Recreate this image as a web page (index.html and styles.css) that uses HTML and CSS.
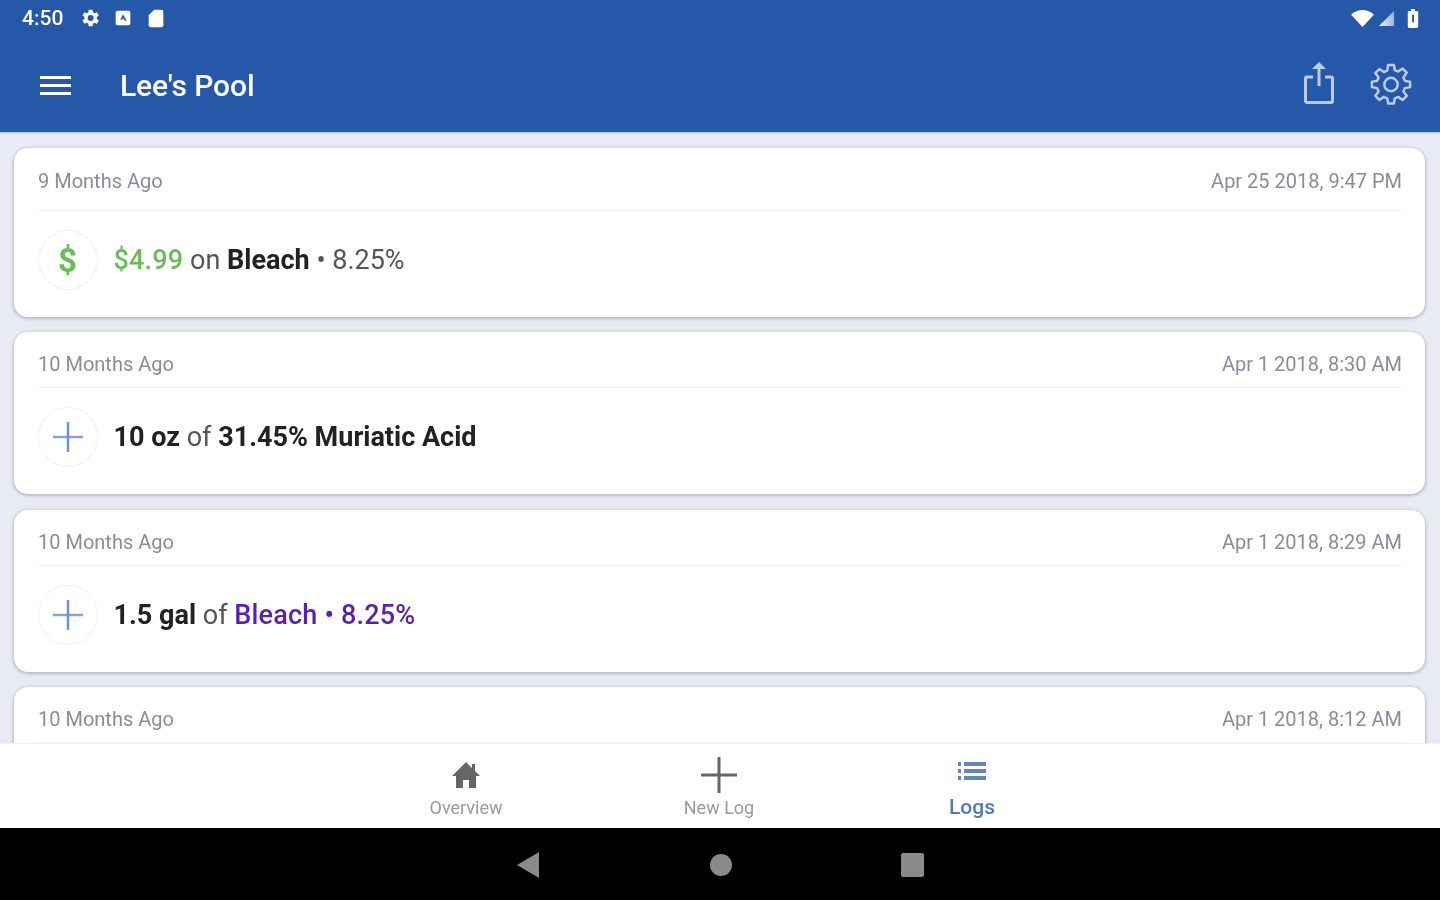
FILE: index.html
```html
<!doctype html>
<html>
    <head>
        <link rel="stylesheet" href="styles.css">
    </head>
    <body>
        <header class="appbar">
            <div class="statusbar">
                <span class="clock">4:50</span>
                <svg class="status-icon" viewBox="0 0 24 24"><path fill="#fff" fill-rule="evenodd" d="M19.400 13a7.500 7.500 0 0 0 0-2l2.200-1.700-2.100-3.600-2.600 1a7.500 7.500 0 0 0-1.700-1l-.4-2.800h-4.200l-.4 2.800a7.500 7.500 0 0 0-1.700 1l-2.600-1-2.100 3.600L6 11a7.500 7.500 0 0 0 0 2l-2.200 1.700 2.100 3.600 2.600-1a7.500 7.500 0 0 0 1.700 1l.4 2.800h4.200l.4-2.800a7.500 7.500 0 0 0 1.700-1l2.600 1 2.100-3.600zM12.700 15.300a3.300 3.300 0 1 1 0-6.600 3.300 3.300 0 0 1 0 6.600z"/></svg>
                <svg class="status-icon" viewBox="0 0 24 24"><path fill="#fff" fill-rule="evenodd" d="M6 4h12a2 2 0 0 1 2 2v12a2 2 0 0 1-2 2H6a2 2 0 0 1-2-2V6a2 2 0 0 1 2-2zm6 4l-3 6h2l1-2 2 3h2z"/></svg>
                <svg class="status-icon" viewBox="0 0 24 24"><path fill="#fff" d="M10 3h8a2 2 0 0 1 2 2v15a2 2 0 0 1-2 2H6a2 2 0 0 1-2-2V9z"/></svg>
                <span class="spacer"></span>
                <svg class="wifi-icon" viewBox="0 0 26 20"><path fill="#fff" d="M13 19L1 6c7-6.500 17-6.500 24 0z"/></svg>
                <svg class="signal-icon" viewBox="0 0 18 18">
                    <defs><linearGradient id="signalfade"><stop offset="0" stop-color="#fff" stop-opacity=".95"/><stop offset="1" stop-color="#fff" stop-opacity=".55"/></linearGradient></defs>
                    <path fill="url(#signalfade)" d="M17 1v16H1z"/>
                </svg>
                <svg class="battery-icon" viewBox="0 0 12 20"><path fill="#fff" fill-rule="evenodd" d="M4 0h4v2h2a1.500 1.500 0 0 1 1.500 1.500v15A1.500 1.500 0 0 1 10 20H2a1.500 1.500 0 0 1-1.500-1.500v-15A1.500 1.500 0 0 1 2 2h2zM5 6v8h2V6z"/></svg>
            </div>
            <div class="toolbar">
                <div class="menu-icon"><span></span><span></span><span></span></div>
                <h1 class="title">Lee's Pool</h1>
                <span class="spacer"></span>
                <svg class="share-icon" viewBox="0 0 30 42"><path fill="none" stroke="#bccbe8" stroke-width="3" stroke-linejoin="round" d="M9 15H3a1.500 1.500 0 0 0-1.500 1.500v22A1.500 1.500 0 0 0 3 40.500h24a1.500 1.500 0 0 0 1.500-1.500V16.500A1.500 1.500 0 0 0 27 15h-6M15 24V5"/><path fill="#bccbe8" d="M15 0l7 7H8z"/></svg>
                <svg class="gear-icon" viewBox="0 0 44 44"><g fill="none" stroke="#bccbe8" stroke-width="2.600" stroke-linejoin="round"><path d="M19 2h6l1 5.500 3.500 1.500 4.700-3.200 4.300 4.300L35 15.200l1.500 3.500 5.500 1v5.600l-5.500 1-1.500 3.500 3.500 4.600-4.300 4.300-4.700-3.200-3.500 1.500-1 5.500h-6l-1-5.500-3.500-1.500-4.700 3.200-4.300-4.300L9 29.800l-1.500-3.500-5.500-1v-5.600l5.500-1L9 15.200 5.500 10.600l4.300-4.300L14.500 9.500 18 8z"/><circle cx="22" cy="22.500" r="7"/></g></svg>
            </div>
        </header>

        <main class="logs">
            <article class="card">
                <div class="card-head card-head-tall">
                    <span>9 Months Ago</span>
                    <span>Apr 25 2018, 9:47 PM</span>
                </div>
                <div class="card-row">
                    <div class="badge badge-money">$</div>
                    <p class="entry"><span class="green">$4.99</span> on <b>Bleach</b> • 8.25%</p>
                </div>
            </article>
            <article class="card">
                <div class="card-head">
                    <span>10 Months Ago</span>
                    <span>Apr 1 2018, 8:30 AM</span>
                </div>
                <div class="card-row">
                    <div class="badge"><svg class="plus" viewBox="0 0 30 30"><path stroke="#86a3d6" stroke-width="2.500" d="M0 15h30"/><path stroke="#6f93cf" stroke-width="2.500" d="M15 0v30"/></svg></div>
                    <p class="entry"><b>10 oz</b> of <b>31.45% Muriatic Acid</b></p>
                </div>
            </article>
            <article class="card">
                <div class="card-head">
                    <span>10 Months Ago</span>
                    <span>Apr 1 2018, 8:29 AM</span>
                </div>
                <div class="card-row">
                    <div class="badge"><svg class="plus" viewBox="0 0 30 30"><path stroke="#86a3d6" stroke-width="2.500" d="M0 15h30"/><path stroke="#6f93cf" stroke-width="2.500" d="M15 0v30"/></svg></div>
                    <p class="entry"><b>1.5 gal</b> of <b class="purple">Bleach • 8.25%</b></p>
                </div>
            </article>
            <article class="card">
                <div class="card-head">
                    <span>10 Months Ago</span>
                    <span>Apr 1 2018, 8:12 AM</span>
                </div>
            </article>
        </main>

        <nav class="tabs">
            <div class="tab">
                <div class="tab-slot"><svg class="home-icon" viewBox="0 0 30 28"><path fill="#666" d="M15 1L1 15h4v12h7v-8h6v8h7V15h4l-5-5V3h-3v4z"/></svg></div>
                <span>Overview</span>
            </div>
            <div class="tab">
                <div class="tab-slot"><svg class="add-icon" viewBox="0 0 36 36"><path stroke="#666" stroke-width="3" d="M0 18h36M18 0v36"/></svg></div>
                <span>New Log</span>
            </div>
            <div class="tab tab-active">
                <div class="tab-slot tab-slot-top"><svg class="list-icon" viewBox="0 0 28 18"><path fill="#6583c4" d="M0 0h3v4H0zM6 0h22v4H6zM0 7h3v4H0zM6 7h22v4H6zM0 14h3v4H0zM6 14h22v4H6z"/></svg></div>
                <span>Logs</span>
            </div>
        </nav>

        <footer class="navbar">
            <svg class="nav-icon" viewBox="0 0 24 26"><path fill="#8a8a8a" d="M22 0v26L0 13z"/></svg>
            <svg class="nav-icon" viewBox="0 0 24 26"><circle cx="12" cy="13" r="11" fill="#8a8a8a"/></svg>
            <svg class="nav-icon" viewBox="0 0 24 26"><rect y="1" width="23" height="24" rx="2" fill="#8a8a8a"/></svg>
        </footer>
    </body>
</html>
```

FILE: styles.css
```css
* {
    margin: 0;
    padding: 0;
    box-sizing: border-box;
}
html,
body {
    height: 100%;
    overflow: hidden;
}
body {
    display: flex;
    flex-direction: column;
    background: #e8eaf4;
    font-family: Roboto, "Liberation Sans", sans-serif;
}
/* the source is a soft upscaled capture */
.statusbar,
.toolbar,
.card,
.tab,
.nav-icon {
    filter: blur(0.7px);
}
.spacer {
    flex: 1;
}
.appbar {
    height: 132px;
    flex: none;
    background: #2558a8;
    box-shadow: 0 1px 2px rgba(0, 0, 0, 0.2);
    z-index: 1;
}
.statusbar {
    height: 38px;
    display: flex;
    align-items: center;
    padding: 0 20px 2px 22px;
    color: #fff;
}
.clock {
    font-size: 21px;
    font-weight: 500;
    margin-right: 16px;
}
.status-icon {
    width: 22px;
    height: 22px;
    margin-right: 11px;
}
.wifi-icon {
    width: 25px;
    height: 19px;
}
.signal-icon {
    width: 17px;
    height: 17px;
    margin-left: 3px;
}
.battery-icon {
    width: 12px;
    height: 19px;
    margin-left: 12px;
    margin-right: 1px;
}
.toolbar {
    height: 94px;
    display: flex;
    align-items: center;
    padding: 0 28px 0 40px;
}
.menu-icon {
    width: 31px;
    display: flex;
    flex-direction: column;
    gap: 5px;
    margin-right: 49px;
}
.menu-icon span {
    height: 3px;
    background: #fff;
}
.title {
    font-size: 30px;
    font-weight: 500;
    color: #fff;
    letter-spacing: -0.1px;
}
.share-icon {
    width: 30px;
    height: 42px;
    margin-right: 36px;
    margin-bottom: 5px;
}
.gear-icon {
    width: 42px;
    height: 42px;
    margin-bottom: 2px;
}
.logs {
    flex: 1;
    min-height: 0;
    overflow: hidden;
    padding: 16px 15px 0 14px;
    display: flex;
    flex-direction: column;
    gap: 15.4px;
}
.card {
    flex: none;
    background: #fff;
    border-radius: 14px;
    box-shadow: 0 1px 3px 1px rgba(70, 75, 100, 0.3);
    padding: 0 23px 27px 24px;
}
.card-head {
    display: flex;
    justify-content: space-between;
    font-size: 20px;
    color: #8a8c9c;
    padding: 20px 0 11px;
    line-height: 24px;
    border-bottom: 1px solid #f1f1f4;
}
.card-head-tall {
    padding: 21px 0 17px;
}
.card-row {
    display: flex;
    align-items: center;
    gap: 15.5px;
    margin-top: 19px;
}
.badge {
    width: 60px;
    height: 60px;
    padding-right: 1px;
    border: 1px solid #f0f0f0;
    border-radius: 50%;
    display: flex;
    align-items: center;
    justify-content: center;
}
.badge-money {
    color: #6cbb59;
    font-size: 33px;
    font-weight: 700;
}
.plus {
    width: 30px;
    height: 30px;
}
.entry {
    font-size: 27px;
    color: #555;
}
.entry b {
    font-weight: 700;
    color: #222;
}
.entry .green {
    color: #6cbb59;
    font-weight: 500;
    letter-spacing: 0.2px;
}
.entry .purple {
    color: #5b1fb0;
    font-weight: 500;
    letter-spacing: 0.2px;
}
.tabs {
    height: 85px;
    flex: none;
    background: #fff;
    border-top: 1px solid #f2f2f2;
    display: flex;
    justify-content: center;
    gap: 175px;
    padding: 12px 2px 0 0;
    z-index: 1;
}
.tab {
    width: 78px;
    display: flex;
    flex-direction: column;
    align-items: center;
    gap: 3px;
    font-size: 18px;
    color: #9a9a9a;
    white-space: nowrap;
}
.tab-slot {
    height: 38px;
    display: flex;
    align-items: center;
}
.tab-slot-top {
    align-items: flex-start;
    padding-top: 6px;
}
.home-icon {
    width: 30px;
    height: 28px;
}
.add-icon {
    width: 36px;
    height: 36px;
}
.list-icon {
    width: 28px;
    height: 18px;
}
.tab-active {
    color: #5477bd;
    font-size: 21px;
    font-weight: 500;
    gap: 1px;
}
.navbar {
    height: 72px;
    flex: none;
    background: #000;
    display: flex;
    justify-content: center;
    align-items: center;
    gap: 168px;
    padding: 2px 0 0 2px;
}
.nav-icon {
    width: 24px;
    height: 26px;
}
```
